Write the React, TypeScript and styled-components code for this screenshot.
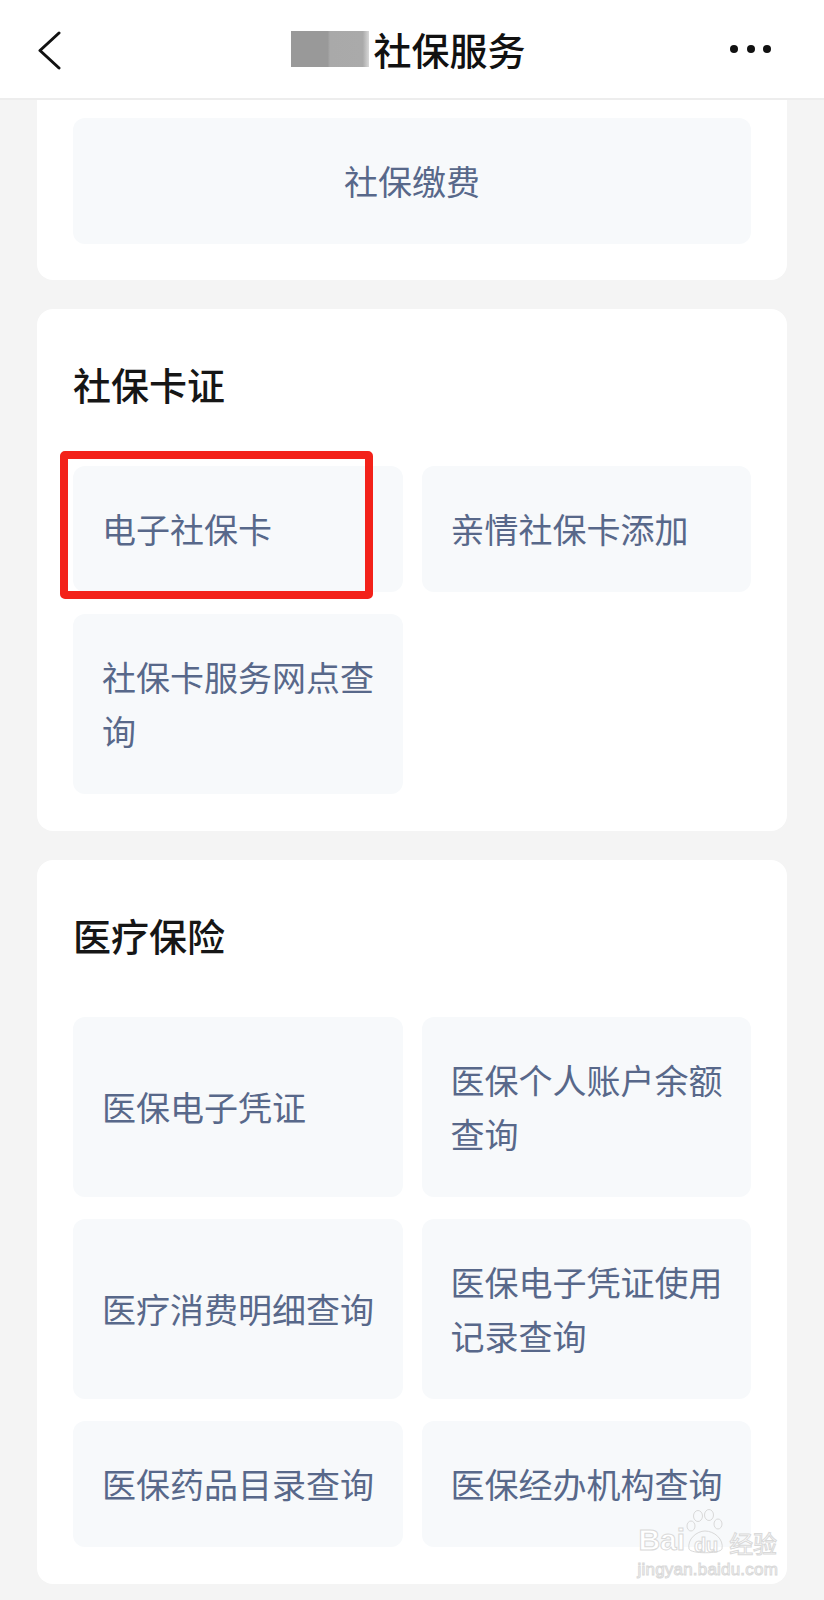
import styled, { createGlobalStyle } from "styled-components";

const GlobalStyle = createGlobalStyle`
  html, body {
    margin: 0;
    padding: 0;
    background: #f4f4f4;
  }
  body {
    font-family: "Noto Sans CJK SC", "Noto Sans", sans-serif;
  }
`;

const Page = styled.div`
  position: relative;
  width: 824px;
  min-height: 1600px;
  background: #f4f4f4;
  overflow: hidden;
`;

const Header = styled.header`
  display: grid;
  grid-template-columns: 1fr auto 1fr;
  align-items: center;
  height: 98px;
  padding: 0 45px 0 38px;
  background: #ffffff;
  border-bottom: 2px solid #ededed;
`;

const BackButton = styled.button`
  justify-self: start;
  display: flex;
  padding: 0;
  border: 0;
  background: none;
  margin-top: 4px;
`;

const Title = styled.h1`
  display: flex;
  align-items: center;
  margin: 0;
  font-size: 38px;
  font-weight: 500;
  line-height: 1;
  color: #111111;
`;

const Blur = styled.span`
  display: inline-block;
  width: 78px;
  height: 36px;
  margin-right: 4px;
  background: linear-gradient(
    to right,
    #999999 0%,
    #999999 47%,
    #a9a9a9 50%,
    #aaaaaa 92%,
    #d8d8d8 100%
  );
`;

const MoreButton = styled.button`
  justify-self: end;
  display: flex;
  gap: 8.5px;
  margin-right: 8px;
  padding: 0;
  border: 0;
  background: none;
`;

const Dot = styled.span`
  width: 8px;
  height: 8px;
  border-radius: 50%;
  background: #111111;
`;

const Content = styled.main`
  display: flex;
  flex-direction: column;
  gap: 29px;
  padding: 0 37px;
`;

const Card = styled.section<{ $clipped?: boolean }>`
  background: #ffffff;
  border-radius: ${(p) => (p.$clipped ? "0 0 16px 16px" : "16px")};
  padding: ${(p) => (p.$clipped ? "18px 36px 36px" : "50px 36px 37px")};
`;

const SectionTitle = styled.h2`
  margin: 0 0 57px;
  font-size: 38px;
  line-height: 50px;
  font-weight: 500;
  color: #161616;
`;

const Grid = styled.div`
  display: grid;
  grid-template-columns: 1fr 1fr;
  column-gap: 19px;
  row-gap: 22px;
`;

const Item = styled.div<{ $center?: boolean }>`
  position: relative;
  display: flex;
  align-items: center;
  justify-content: ${(p) => (p.$center ? "center" : "flex-start")};
  min-height: 126px;
  box-sizing: border-box;
  padding: ${(p) => (p.$center ? "36px 20px" : "36px 20px 36px 29px")};
  background: #f7f9fb;
  border-radius: 12px;
  font-size: 34px;
  line-height: 54px;
  color: #58688a;
`;

const Highlight = styled.span`
  position: absolute;
  left: -13px;
  top: -15px;
  width: 313px;
  height: 148px;
  box-sizing: border-box;
  border: 8px solid #f3221a;
  border-radius: 5px;
  pointer-events: none;
`;

const Watermark = styled.div`
  position: absolute;
  right: 46px;
  bottom: 22px;
  display: flex;
  flex-direction: column;
  align-items: center;
  color: #ffffff;
  font-family: "Liberation Sans", "Noto Sans CJK SC", sans-serif;
  -webkit-text-stroke: 1px #d9d9d9;
  pointer-events: none;
`;

const WatermarkRow = styled.div`
  display: flex;
  align-items: flex-end;
  font-size: 30px;
  font-weight: 700;
  line-height: 1;
`;

const Paw = styled.span`
  position: relative;
  display: flex;
  align-items: flex-end;
  justify-content: center;
  width: 42px;
  height: 46px;
  font-size: 20px;
`;

const PawArt = styled.svg`
  position: absolute;
  left: 0;
  top: 0;
`;

const WatermarkUrl = styled.div`
  margin-top: 6px;
  font-size: 17px;
  line-height: 1;
  letter-spacing: 0.2px;
`;

const Cjk = styled.span`
  font-family: "Noto Sans CJK SC", sans-serif;
  font-size: 24px;
  font-weight: 400;
  margin-left: 2px;
`;

export default function App() {
  return (
    <Page>
      <GlobalStyle />
      <Header>
        <BackButton>
          <svg width="24" height="40" viewBox="0 0 24 40" fill="none">
            <polyline
              points="21,2 2,19.5 21,37"
              stroke="#111"
              strokeWidth="3"
              strokeLinecap="round"
              strokeLinejoin="round"
            />
          </svg>
        </BackButton>
        <Title>
          <Blur />
          社保服务
        </Title>
        <MoreButton>
          <Dot />
          <Dot />
          <Dot />
        </MoreButton>
      </Header>

      <Content>
        <Card $clipped>
          <Item $center>社保缴费</Item>
        </Card>

        <Card>
          <SectionTitle>社保卡证</SectionTitle>
          <Grid>
            <Item>
              电子社保卡
              <Highlight />
            </Item>
            <Item>亲情社保卡添加</Item>
            <Item>社保卡服务网点查询</Item>
          </Grid>
        </Card>

        <Card>
          <SectionTitle>医疗保险</SectionTitle>
          <Grid>
            {medicalItems.map((label) => (
              <Item key={label}>{label}</Item>
            ))}
          </Grid>
        </Card>
      </Content>

      <Watermark>
        <WatermarkRow>
          Bai
          <Paw>
            <PawArt width="42" height="46" viewBox="0 0 42 46" fill="none">
              <ellipse cx="13" cy="7" rx="4.5" ry="5.5" stroke="#d9d9d9" />
              <ellipse cx="24" cy="6" rx="4.5" ry="5.5" stroke="#d9d9d9" />
              <ellipse cx="6" cy="17" rx="4" ry="5" stroke="#d9d9d9" />
              <ellipse cx="33" cy="15" rx="4" ry="5" stroke="#d9d9d9" />
              <path
                d="M4 40 C2 30 12 22 20 22 C29 22 39 30 37 40 C35 45 6 45 4 40 Z"
                stroke="#d9d9d9"
              />
            </PawArt>
            du
          </Paw>
          <Cjk>经验</Cjk>
        </WatermarkRow>
        <WatermarkUrl>jingyan.baidu.com</WatermarkUrl>
      </Watermark>
    </Page>
  );
}

const medicalItems = [
  "医保电子凭证",
  "医保个人账户余额查询",
  "医疗消费明细查询",
  "医保电子凭证使用记录查询",
  "医保药品目录查询",
  "医保经办机构查询",
];
